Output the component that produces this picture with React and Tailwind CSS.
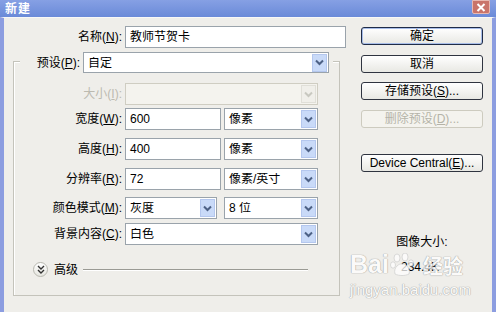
import React from "react";

const Chevron = ({ disabled }) => (
  <svg width="9" height="7" viewBox="0 0 9 7">
    <path d="M1 1.5 L4.5 5 L8 1.5" fill="none" stroke={disabled ? "#c8c8c0" : "#4d6185"} strokeWidth="2" />
  </svg>
);

const Select = ({ w, value, disabled }) => (
  <div
    className={`h-full flex items-center border ${disabled ? "border-[#cfcdc2] bg-[#f4f3ee]" : "border-[#9aa3ab] bg-white"}`}
    style={{ width: w }}
  >
    <div className="flex-1 pl-[4px] text-black truncate">{value}</div>
    <div
      className={`w-[15px] h-[18px] mr-[1px] flex items-center justify-center border ${
        disabled ? "border-[#e0dfd8] bg-[#f0efea]" : "border-[#b4c7ee] bg-[#c9daf8]"
      }`}
    >
      <Chevron disabled={disabled} />
    </div>
  </div>
);

const Input = ({ w, value }) => (
  <div className="h-full flex items-center border border-[#9aa3ab] bg-white pl-[4px]" style={{ width: w }}>
    {value}
  </div>
);

const Label = ({ w, children, disabled }) => (
  <div className={`text-right ${disabled ? "text-[#bcbab0]" : "text-black"}`} style={{ width: w }}>
    {children}
  </div>
);

const U = ({ children }) => <span className="underline">{children}</span>;

const Btn = ({ children, className = "", disabled, def }) => (
  <div
    className={`h-[18px] w-[122px] flex items-center justify-center rounded-[3px] border ${
      disabled
        ? "border-[#cdcbbf] bg-[#f4f3ee] text-[#b5b3a8]"
        : def
        ? "border-[#1f2c48] bg-gradient-to-b from-white to-[#e8e8e3] shadow-[inset_0_0_0_1px_#a8bde8] text-black"
        : "border-[#2f3440] bg-gradient-to-b from-white to-[#e8e8e3] text-black"
    } ${className}`}
  >
    {children}
  </div>
);

export default function App() {
  return (
    <div
      className="relative w-[496px] h-[312px] overflow-hidden flex flex-col text-[12px] leading-none bg-[#efeeea]"
      style={{ fontFamily: '"Liberation Sans", "Noto Sans CJK SC", sans-serif' }}
    >
      {/* title bar */}
      <div className="h-[17px] flex items-start justify-between bg-gradient-to-b from-[#86a0e4] to-[#6a8ad8]">
        <div className="ml-[5px] mt-[3px] text-white font-bold text-[12px] tracking-[1px]">新建</div>
        <div className="mr-[6px] w-[18px] h-[14px] rounded-b-[2px] bg-[#c9746a] border border-[#e8b8b0] flex items-center justify-center">
          <svg width="10" height="9" viewBox="0 0 10 9">
            <path d="M1.5 1 L8.5 8 M8.5 1 L1.5 8" stroke="white" strokeWidth="2" />
          </svg>
        </div>
      </div>

      {/* body */}
      <div className="flex-1 flex border-l-[4px] border-r-[4px] border-[#8c9de0] border-t border-t-[#f8f8f6]">
        {/* left column */}
        <div className="w-[342px] flex flex-col pt-[8px]">
          <div className="h-[22px] flex items-center">
            <Label w={118}>
              名称(<U>N</U>):
            </Label>
            <div className="ml-[3px] h-full">
              <Input w={221} value="教师节贺卡" />
            </div>
          </div>

          {/* group box */}
          <div className="mt-[13px] ml-[9px] w-[327px] h-[235px] border border-[#c4c3bb] shadow-[inset_1px_1px_0_#fff] flex flex-col">
            <div className="-mt-[10px] ml-[6px] w-[313px] h-[21px] flex items-center bg-[#efeeea]">
              <Label w={60}>
                预设(<U>P</U>):
              </Label>
              <div className="ml-[3px] h-full">
                <Select w={246} value="自定" />
              </div>
            </div>

            <div className="mt-[10px] h-[22px] flex items-center">
              <Label w={108} disabled>
                大小(<U>I</U>):
              </Label>
              <div className="ml-[3px] h-full">
                <Select w={193} value="" disabled />
              </div>
            </div>

            <div className="mt-[3px] h-[22px] flex items-center">
              <Label w={108}>
                宽度(<U>W</U>):
              </Label>
              <div className="ml-[3px] h-full">
                <Input w={96} value="600" />
              </div>
              <div className="ml-[3px] h-full">
                <Select w={94} value="像素" />
              </div>
            </div>

            <div className="mt-[8px] h-[22px] flex items-center">
              <Label w={108}>
                高度(<U>H</U>):
              </Label>
              <div className="ml-[3px] h-full">
                <Input w={96} value="400" />
              </div>
              <div className="ml-[3px] h-full">
                <Select w={94} value="像素" />
              </div>
            </div>

            <div className="mt-[8px] h-[22px] flex items-center">
              <Label w={108}>
                分辨率(<U>R</U>):
              </Label>
              <div className="ml-[3px] h-full">
                <Input w={96} value="72" />
              </div>
              <div className="ml-[3px] h-full">
                <Select w={94} value="像素/英寸" />
              </div>
            </div>

            <div className="mt-[7px] h-[22px] flex items-center">
              <Label w={108}>
                颜色模式(<U>M</U>):
              </Label>
              <div className="ml-[3px] h-full">
                <Select w={92} value="灰度" />
              </div>
              <div className="ml-[7px] h-full">
                <Select w={94} value="8 位" />
              </div>
            </div>

            <div className="mt-[4px] h-[22px] flex items-center">
              <Label w={108}>
                背景内容(<U>C</U>):
              </Label>
              <div className="ml-[3px] h-full">
                <Select w={193} value="白色" />
              </div>
            </div>

            <div className="mt-[17px] h-[15px] flex items-center">
              <div className="ml-[19px] w-[15px] h-[15px] rounded-full border border-[#b8b8b0] bg-gradient-to-b from-white to-[#e6e6e0] flex items-center justify-center">
                <svg width="8" height="9" viewBox="0 0 8 9">
                  <path d="M1 1 L4 4 L7 1 M1 5 L4 8 L7 5" fill="none" stroke="#333" strokeWidth="1.4" />
                </svg>
              </div>
              <div className="ml-[6px]">高级</div>
              <div className="ml-[5px] flex-1 mr-[31px] h-[1px] bg-[#9a9a94] shadow-[0_1px_0_#fff]" />
            </div>
          </div>
        </div>

        {/* right column */}
        <div className="ml-[15px] w-[122px] flex flex-col">
          <Btn def className="mt-[9px]">确定</Btn>
          <Btn className="mt-[10px]">取消</Btn>
          <Btn className="mt-[9px]">
            存储预设(<U>S</U>)...
          </Btn>
          <Btn disabled className="mt-[10px]">
            删除预设(<U>D</U>)...
          </Btn>
          <Btn className="mt-[26px]">
            Device Central(<U>E</U>)...
          </Btn>
          <div className="mt-[64px] text-center">图像大小:</div>
          <div className="mt-[13px] pr-[4px] text-center">234.4K</div>
        </div>
      </div>

      {/* watermark */}
      <div className="absolute left-[350px] top-[252px] w-[125px] whitespace-nowrap flex flex-col items-start opacity-75 pointer-events-none">
        <div className="flex items-end text-white font-bold text-[25px] leading-none [text-shadow:0_0_1px_#888,0_0_1px_#888]">
          <span>Bai</span>
          <svg width="26" height="24" viewBox="0 0 26 24" className="mx-[1px] shrink-0">
            <g fill="#ffffff" stroke="#c8c8c8" strokeWidth="0.8">
              <ellipse cx="7" cy="5" rx="3" ry="4" />
              <ellipse cx="15" cy="4" rx="3" ry="4" />
              <ellipse cx="3" cy="12" rx="2.5" ry="3.2" />
              <ellipse cx="21" cy="10" rx="2.5" ry="3.2" />
              <path d="M5 21 C3 14 10 10 12 11 C15 10 21 15 19 21 C15 23 9 23 5 21Z" />
            </g>
          </svg>
          <span className="ml-[6px] text-[20px]">经验</span>
        </div>
        <div className="mt-[5px] text-white text-[15px] leading-none [text-shadow:0_0_1px_#888,0_0_1px_#888]">
          jingyan.baidu.com
        </div>
      </div>
    </div>
  );
}
